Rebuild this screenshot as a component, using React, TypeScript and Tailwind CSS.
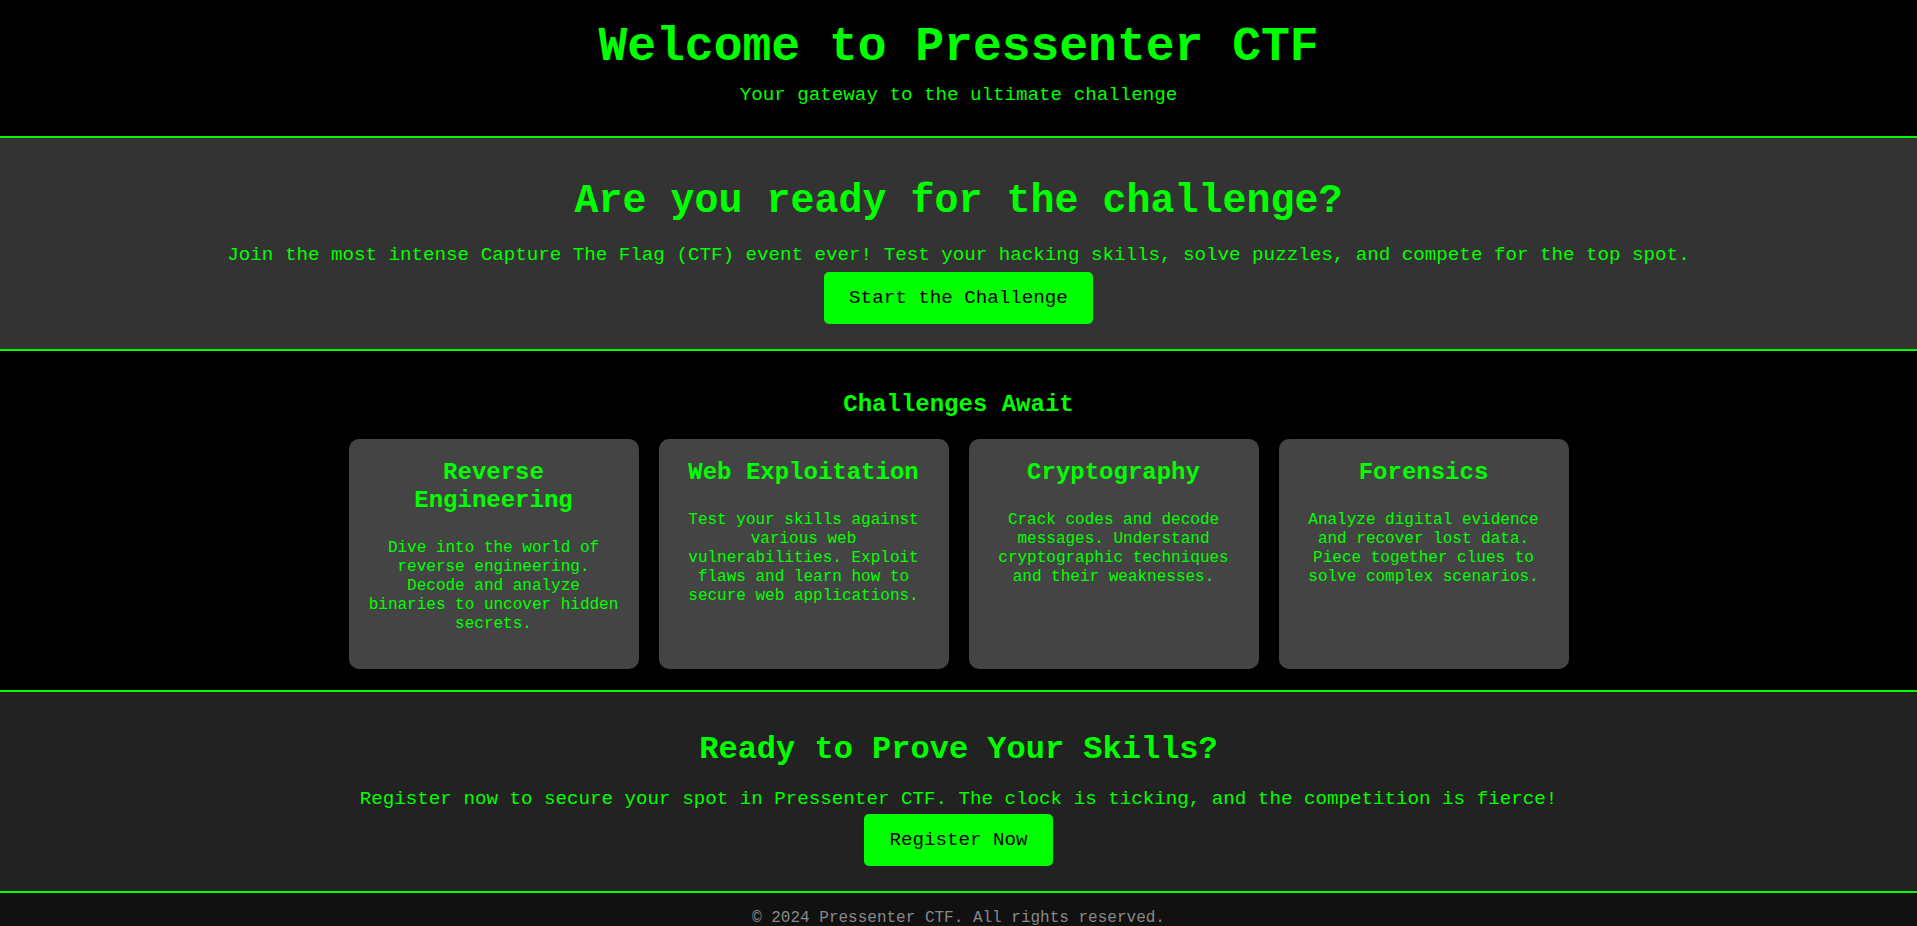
import React from "react";

const cards = [
  {
    title: "Reverse Engineering",
    desc: "Dive into the world of reverse engineering. Decode and analyze binaries to uncover hidden secrets.",
  },
  {
    title: "Web Exploitation",
    desc: "Test your skills against various web vulnerabilities. Exploit flaws and learn how to secure web applications.",
  },
  {
    title: "Cryptography",
    desc: "Crack codes and decode messages. Understand cryptographic techniques and their weaknesses.",
  },
  {
    title: "Forensics",
    desc: "Analyze digital evidence and recover lost data. Piece together clues to solve complex scenarios.",
  },
];

export default function App() {
  return (
    <div
      className="min-h-screen bg-black text-[#00ff00] text-center"
      style={{ fontFamily: '"Liberation Mono", "Courier New", monospace' }}
    >
      <header className="bg-black px-5 pt-5 pb-5 border-b-2 border-[#00ff00]">
        <h1 className="text-[48px] leading-[54px] font-bold">Welcome to Pressenter CTF</h1>
        <p className="mt-[10px] mb-[10px] text-[19.2px] leading-[22px]">
          Your gateway to the ultimate challenge
        </p>
      </header>

      <section className="bg-[#333333] px-5 pt-[41px] pb-[25px] border-b-2 border-[#00ff00]">
        <h2 className="text-[40px] leading-[45px] font-bold">Are you ready for the challenge?</h2>
        <p className="mt-5 text-[19.2px] leading-[22px]">
          Join the most intense Capture The Flag (CTF) event ever! Test your hacking skills, solve puzzles, and compete for the top spot.
        </p>
        <div className="mt-[6px] flex justify-center">
          <a
            href="#"
            className="bg-[#00ff00] text-black rounded-[5px] px-[25px] py-[15px] text-[19.2px] leading-[22px]"
          >
            Start the Challenge
          </a>
        </div>
      </section>

      <section className="bg-black px-5 pt-10 pb-[21px]">
        <h2 className="text-[24px] leading-[27px] font-bold">Challenges Await</h2>
        <div className="mt-[21px] flex justify-center gap-5">
          {cards.map((c) => (
            <div
              key={c.title}
              className="w-[290px] min-h-[230px] bg-[#444444] rounded-[10px] p-5"
            >
              <h3 className="text-[24px] leading-[28px] font-bold">{c.title}</h3>
              <p className="mt-[24px] text-[16px] leading-[19px]">{c.desc}</p>
            </div>
          ))}
        </div>
      </section>

      <section className="bg-[#222222] px-5 pt-10 pb-[25px] border-y-2 border-[#00ff00]">
        <h2 className="text-[32px] leading-[36px] font-bold">Ready to Prove Your Skills?</h2>
        <p className="mt-5 text-[19.2px] leading-[22px]">
          Register now to secure your spot in Pressenter CTF. The clock is ticking, and the competition is fierce!
        </p>
        <div className="mt-[4px] flex justify-center">
          <a
            href="#"
            className="bg-[#00ff00] text-black rounded-[5px] px-[25px] py-[15px] text-[19.2px] leading-[22px]"
          >
            Register Now
          </a>
        </div>
      </section>

      <footer className="bg-[#111111] px-5 pt-4 pb-4">
        <p className="text-[16px] leading-[18px] text-[#888888]">
          © 2024 Pressenter CTF. All rights reserved.
        </p>
      </footer>
    </div>
  );
}
